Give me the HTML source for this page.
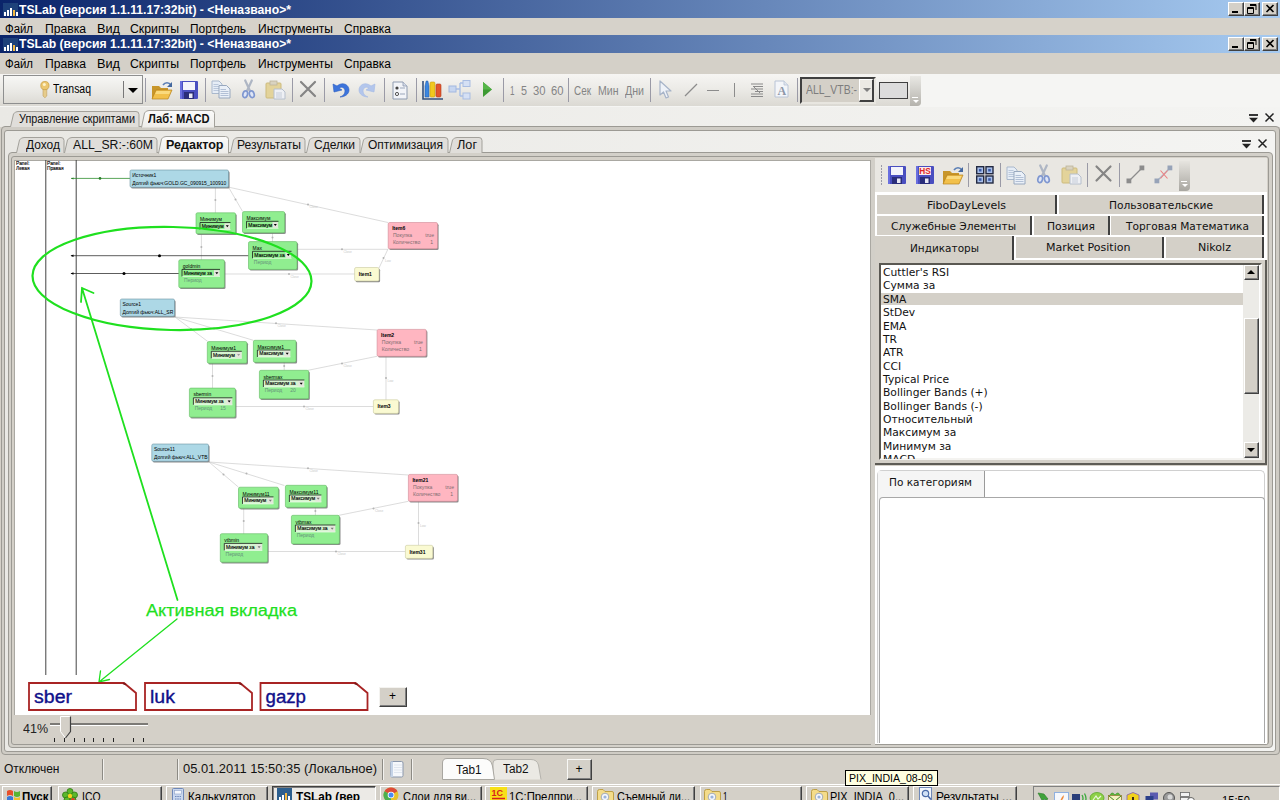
<!DOCTYPE html>
<html lang="ru"><head><meta charset="utf-8"><title>TSLab</title>
<style>
html,body{margin:0;padding:0;overflow:hidden}
html{width:1280px;height:800px}
body{width:1280px;height:800px;overflow:hidden;position:relative;background:#d4d0c8;font-family:"Liberation Sans",sans-serif;font-size:12px}
.a{position:absolute;box-sizing:border-box}
.t{position:absolute;white-space:pre}
svg{position:absolute;overflow:visible}
svg text{white-space:pre}
</style></head><body>
<div class="a" style="left:0px;top:0px;width:1280px;height:18px;background:linear-gradient(90deg,#0a246a 0%,#a6caf0 100%);"></div>
<svg style="left:3px;top:3px" width="15" height="13" viewBox="0 0 15 13"><rect x="0" y="0" width="15" height="13" fill="#2d5a86" opacity=".55"/><rect x="1" y="9" width="2" height="4" fill="#fff"/><rect x="4" y="7" width="2" height="6" fill="#fff"/><rect x="7" y="5" width="2" height="8" fill="#fff"/><rect x="10" y="7" width="2" height="6" fill="#f5b942"/><rect x="13" y="9" width="2" height="4" fill="#fff"/></svg>
<div class="t" style="left:19px;top:1.5px;line-height:16px;font-size:12px;font-family:'Liberation Sans',sans-serif;color:#fff;font-weight:bold;transform:scaleX(1.0142);transform-origin:left;">TSLab (версия 1.1.11.17:32bit) - &lt;Неназвано&gt;*</div>
<div class="a" style="left:1228px;top:2px;width:16px;height:14px;background:#d4d0c8;border:1px solid;border-color:#fff #404040 #404040 #fff;box-shadow:inset -1px -1px 0 #808080;"></div>
<div class="a" style="left:1232px;top:11px;width:6px;height:2px;background:#000;"></div>
<div class="a" style="left:1244px;top:2px;width:16px;height:14px;background:#d4d0c8;border:1px solid;border-color:#fff #404040 #404040 #fff;box-shadow:inset -1px -1px 0 #808080;"></div>
<svg style="left:1247px;top:4px" width="10" height="10" viewBox="0 0 10 10"><path d="M3 0.5h6v5.5M3 1.5h6M0.5 3.5h6v6h-6zM0.5 4.5h6" fill="none" stroke="#000" stroke-width="1"/></svg>
<div class="a" style="left:1262px;top:2px;width:16px;height:14px;background:#d4d0c8;border:1px solid;border-color:#fff #404040 #404040 #fff;box-shadow:inset -1px -1px 0 #808080;"></div>
<svg style="left:1266px;top:4.5px" width="8" height="7" viewBox="0 0 8 7"><path d="M0.5 0l7 7M7.5 0l-7 7" stroke="#000" stroke-width="1.6" fill="none"/></svg>
<div class="a" style="left:0px;top:18px;width:1280px;height:17px;background:#d6d2ca;"></div>
<div class="t" style="left:5px;top:21.0px;line-height:16px;font-size:12px;font-family:'Liberation Sans',sans-serif;color:#000;transform:scaleX(0.9491);transform-origin:left;">Файл</div>
<div class="t" style="left:45px;top:21.0px;line-height:16px;font-size:12px;font-family:'Liberation Sans',sans-serif;color:#000;transform:scaleX(1.0115);transform-origin:left;">Правка</div>
<div class="t" style="left:97px;top:21.0px;line-height:16px;font-size:12px;font-family:'Liberation Sans',sans-serif;color:#000;transform:scaleX(1.0595);transform-origin:left;">Вид</div>
<div class="t" style="left:130px;top:21.0px;line-height:16px;font-size:12px;font-family:'Liberation Sans',sans-serif;color:#000;transform:scaleX(1.0227);transform-origin:left;">Скрипты</div>
<div class="t" style="left:190px;top:21.0px;line-height:16px;font-size:12px;font-family:'Liberation Sans',sans-serif;color:#000;transform:scaleX(0.9893);transform-origin:left;">Портфель</div>
<div class="t" style="left:258px;top:21.0px;line-height:16px;font-size:12px;font-family:'Liberation Sans',sans-serif;color:#000;transform:scaleX(1.0023);transform-origin:left;">Инструменты</div>
<div class="t" style="left:344px;top:21.0px;line-height:16px;font-size:12px;font-family:'Liberation Sans',sans-serif;color:#000;transform:scaleX(0.9984);transform-origin:left;">Справка</div>
<div class="a" style="left:0px;top:35px;width:1280px;height:17.5px;background:linear-gradient(90deg,#0a246a 0%,#a6caf0 100%);"></div>
<svg style="left:3px;top:38px" width="15" height="13" viewBox="0 0 15 13"><rect x="0" y="0" width="15" height="13" fill="#2d5a86" opacity=".55"/><rect x="1" y="9" width="2" height="4" fill="#fff"/><rect x="4" y="7" width="2" height="6" fill="#fff"/><rect x="7" y="5" width="2" height="8" fill="#fff"/><rect x="10" y="7" width="2" height="6" fill="#f5b942"/><rect x="13" y="9" width="2" height="4" fill="#fff"/></svg>
<div class="t" style="left:19px;top:36.2px;line-height:16px;font-size:12px;font-family:'Liberation Sans',sans-serif;color:#fff;font-weight:bold;transform:scaleX(1.0142);transform-origin:left;">TSLab (версия 1.1.11.17:32bit) - &lt;Неназвано&gt;*</div>
<div class="a" style="left:1228px;top:37px;width:16px;height:14px;background:#d4d0c8;border:1px solid;border-color:#fff #404040 #404040 #fff;box-shadow:inset -1px -1px 0 #808080;"></div>
<div class="a" style="left:1232px;top:46px;width:6px;height:2px;background:#000;"></div>
<div class="a" style="left:1244px;top:37px;width:16px;height:14px;background:#d4d0c8;border:1px solid;border-color:#fff #404040 #404040 #fff;box-shadow:inset -1px -1px 0 #808080;"></div>
<svg style="left:1247px;top:39px" width="10" height="10" viewBox="0 0 10 10"><path d="M3 0.5h6v5.5M3 1.5h6M0.5 3.5h6v6h-6zM0.5 4.5h6" fill="none" stroke="#000" stroke-width="1"/></svg>
<div class="a" style="left:1262px;top:37px;width:16px;height:14px;background:#d4d0c8;border:1px solid;border-color:#fff #404040 #404040 #fff;box-shadow:inset -1px -1px 0 #808080;"></div>
<svg style="left:1266px;top:39.5px" width="8" height="7" viewBox="0 0 8 7"><path d="M0.5 0l7 7M7.5 0l-7 7" stroke="#000" stroke-width="1.6" fill="none"/></svg>
<div class="a" style="left:0px;top:52.5px;width:1280px;height:22px;background:#d4d0c8;"></div>
<div class="t" style="left:5px;top:56.0px;line-height:16px;font-size:12px;font-family:'Liberation Sans',sans-serif;color:#000;transform:scaleX(0.9491);transform-origin:left;">Файл</div>
<div class="t" style="left:45px;top:56.0px;line-height:16px;font-size:12px;font-family:'Liberation Sans',sans-serif;color:#000;transform:scaleX(1.0115);transform-origin:left;">Правка</div>
<div class="t" style="left:97px;top:56.0px;line-height:16px;font-size:12px;font-family:'Liberation Sans',sans-serif;color:#000;transform:scaleX(1.0595);transform-origin:left;">Вид</div>
<div class="t" style="left:130px;top:56.0px;line-height:16px;font-size:12px;font-family:'Liberation Sans',sans-serif;color:#000;transform:scaleX(1.0227);transform-origin:left;">Скрипты</div>
<div class="t" style="left:190px;top:56.0px;line-height:16px;font-size:12px;font-family:'Liberation Sans',sans-serif;color:#000;transform:scaleX(0.9893);transform-origin:left;">Портфель</div>
<div class="t" style="left:258px;top:56.0px;line-height:16px;font-size:12px;font-family:'Liberation Sans',sans-serif;color:#000;transform:scaleX(1.0023);transform-origin:left;">Инструменты</div>
<div class="t" style="left:344px;top:56.0px;line-height:16px;font-size:12px;font-family:'Liberation Sans',sans-serif;color:#000;transform:scaleX(0.9984);transform-origin:left;">Справка</div>
<div class="a" style="left:0px;top:74px;width:1280px;height:33px;background:#f5f5f3;"></div>
<div class="a" style="left:0px;top:74px;width:921px;height:32px;background:linear-gradient(180deg,#f6f5f3 0%,#ecebe7 45%,#dbd9d3 100%);border-radius:0 0 4px 0;"></div>
<div class="a" style="left:3px;top:75px;width:140px;height:29px;border:1px solid #8e8f8f;background:linear-gradient(180deg,#f7f7f5,#e9e8e4 60%,#dddbd5);"></div>
<div class="a" style="left:123px;top:81px;width:1px;height:17px;background:#777;"></div>
<svg style="left:128px;top:88px" width="10" height="5" viewBox="0 0 10 5"><path d="M0 0h10l-5 5z" fill="#000"/></svg>
<svg style="left:40px;top:81px" width="10" height="17" viewBox="0 0 10 17"><path d="M3 7.500h3.800v7.500l-1.900 1.800L3 15z" fill="#e6cc8c" stroke="#bfa060" stroke-width=".6"/><circle cx="4.900" cy="4.600" r="4.100" fill="#ecc770" stroke="#c9a044" stroke-width=".8"/><circle cx="4.300" cy="3.400" r="1.500" fill="#fdf3cc"/></svg>
<div class="t" style="left:53px;top:81.0px;line-height:16px;font-size:12px;font-family:'Liberation Sans',sans-serif;color:#000;transform:scaleX(0.8720);transform-origin:left;">Transaq</div>
<div class="a" style="left:145px;top:78px;width:1px;height:24px;background:#9a9aa6;"></div>
<div class="a" style="left:205px;top:78px;width:1px;height:24px;background:#9a9aa6;"></div>
<div class="a" style="left:292px;top:78px;width:1px;height:24px;background:#9a9aa6;"></div>
<div class="a" style="left:324px;top:78px;width:1px;height:24px;background:#9a9aa6;"></div>
<div class="a" style="left:384px;top:78px;width:1px;height:24px;background:#9a9aa6;"></div>
<div class="a" style="left:416px;top:78px;width:1px;height:24px;background:#9a9aa6;"></div>
<div class="a" style="left:503px;top:78px;width:1px;height:24px;background:#9a9aa6;"></div>
<div class="a" style="left:568px;top:78px;width:1px;height:24px;background:#9a9aa6;"></div>
<div class="a" style="left:650px;top:78px;width:1px;height:24px;background:#9a9aa6;"></div>
<div class="a" style="left:797px;top:78px;width:1px;height:24px;background:#9a9aa6;"></div>
<svg style="left:151px;top:80px" width="22" height="20" viewBox="0 0 22 20"><path d="M1 6h7l2 2h7v11H1z" fill="#c8962a"/><path d="M1 19l4-9h16l-4 9z" fill="#f2c04a" stroke="#b8821c" stroke-width=".7"/><path d="M5.500 11h14l-1.300 3h-14z" fill="#fbe08a" opacity=".8"/><path d="M12 5c2-3 6-3 8 0" fill="none" stroke="#5b7fb5" stroke-width="1.6"/><path d="M21 2v5h-5z" fill="#44689f"/></svg>
<svg style="left:180px;top:81px" width="18" height="18" viewBox="0 0 18 18"><rect x="0" y="0" width="18" height="18" rx="1" fill="#4a4fc0"/><rect x="3" y="1" width="12" height="8" fill="#f4f4fb"/><rect x="4" y="11" width="10" height="7" fill="#2a2d7a"/><rect x="9" y="12.5" width="3.5" height="4.5" fill="#e8e8f4"/><rect x="0" y="0" width="2" height="18" fill="#6a6fdf"/></svg>
<svg style="left:211px;top:80px" width="20" height="19" viewBox="0 0 20 19"><path d="M1 1h7l3 3v9.500H1z" fill="#e6edf6" stroke="#a9b8cc" stroke-width="1"/><path d="M2.500 4.500h5M2.500 6.500h6.500M2.500 8.500h6.500M2.500 10.500h6.500" stroke="#aebdd4" stroke-width=".8"/><path d="M8 5.500h7.500l3.500 3.500v9H8z" fill="#eaf0f8" stroke="#98a8be" stroke-width="1"/><path d="M9.500 9.500h5.500M9.500 11.500h8M9.500 13.500h8M9.500 15.500h8" stroke="#a3b4cd" stroke-width=".8"/></svg>
<svg style="left:242px;top:80px" width="13" height="19" viewBox="0 0 13 19"><path d="M3.200 0.500L8.300 11.500M9.800 0.500L4.700 11.500" stroke="#aeb6c4" stroke-width="2.200" fill="none" stroke-linecap="round"/><ellipse cx="3.200" cy="14.300" rx="2.300" ry="3.400" transform="rotate(18 3.2 14.3)" fill="#dfe6f6" stroke="#7f97d0" stroke-width="1.700"/><ellipse cx="9.800" cy="14.300" rx="2.300" ry="3.400" transform="rotate(-18 9.8 14.3)" fill="#dfe6f6" stroke="#7f97d0" stroke-width="1.700"/></svg>
<svg style="left:265px;top:80px" width="22" height="20" viewBox="0 0 22 20"><rect x="1" y="3" width="15" height="15" rx="1" fill="#e3d39a" stroke="#cdbb7c" stroke-width="1"/><rect x="5" y="1" width="7" height="4" fill="#d9d3c0" stroke="#bdb59a" stroke-width=".8"/><path d="M9 9h8l3 3v7H9z" fill="#eef0f4" stroke="#b6bfcc" stroke-width="1"/><path d="M11 13h6M11 15h6M11 17h6" stroke="#c5ccd8" stroke-width="1"/></svg>
<svg style="left:299px;top:80px" width="18" height="18" viewBox="0 0 18 18"><path d="M2 2l14 14M16 2l-14 14" stroke="#858585" stroke-width="2.2" fill="none" stroke-linecap="round"/></svg>
<svg style="left:331px;top:80px" width="19" height="19" viewBox="0 0 19 19"><path d="M2 4l1 8 8-2-3-2c3-2 6 0 6 3s-2 5-5 6c5 0 9-3 9-7 0-5-6-9-12-4z" fill="#3c74dc" stroke="#2a5cc0" stroke-width=".6"/></svg>
<svg style="left:358px;top:80px" width="19" height="19" viewBox="0 0 19 19"><path d="M17 4l-1 8-8-2 3-2c-3-2-6 0-6 3s2 5 5 6c-5 0-9-3-9-7 0-5 6-9 12-4z" fill="#b3c6ec" stroke="#a2b8e4" stroke-width=".6"/></svg>
<svg style="left:392px;top:81px" width="16" height="19" viewBox="0 0 16 19"><path d="M1 1h10l4 4v13H1z" fill="#f2f4f8" stroke="#8e9bb0" stroke-width="1"/><path d="M11 1v4h4" fill="#d6dce8" stroke="#8e9bb0" stroke-width=".8"/><circle cx="5" cy="7" r="1.6" fill="#444"/><circle cx="5" cy="13" r="1.6" fill="none" stroke="#555" stroke-width="1"/><path d="M8 7h5M8 13h5" stroke="#9aa6ba" stroke-width="1.2"/></svg>
<svg style="left:421px;top:79px" width="23" height="22" viewBox="0 0 23 22"><path d="M2 2v18h20" fill="none" stroke="#33507e" stroke-width="1.6"/><path d="M4 7l1.200-5h1.600l1.200 5v11H4z" fill="#3b86e0" stroke="#245fb0" stroke-width=".6"/><rect x="9" y="3" width="5" height="15" rx="1.200" fill="#f1c81e" stroke="#c79d10" stroke-width=".6"/><rect x="15" y="5" width="5" height="13" rx="1.200" fill="#e2552d" stroke="#b13a1a" stroke-width=".6"/></svg>
<svg style="left:449px;top:80px" width="22" height="20" viewBox="0 0 22 20"><path d="M7 9h4M11 3v13M11 3h3M11 16h3" stroke="#a9bfe6" stroke-width="1.4" fill="none"/><rect x="0" y="6" width="7" height="6" fill="#c7d6f0" stroke="#a2b8e0" stroke-width="1"/><rect x="14" y="0.500" width="7" height="6" fill="#d5e0f4" stroke="#a9bde2" stroke-width="1"/><rect x="14" y="13" width="7" height="6" fill="#d5e0f4" stroke="#a9bde2" stroke-width="1"/></svg>
<svg style="left:483px;top:82px" width="9" height="15" viewBox="0 0 9 15"><path d="M0 0l9 7.500-9 7.500z" fill="#3d9a32"/><path d="M0 0l9 7.500-9 0z" fill="#55b548"/></svg>
<div class="t" style="left:509.5px;top:82.5px;line-height:16px;font-size:12px;font-family:'Liberation Sans',sans-serif;color:#848484;transform:scaleX(0.6743);transform-origin:left;">1</div>
<div class="t" style="left:521px;top:82.5px;line-height:16px;font-size:12px;font-family:'Liberation Sans',sans-serif;color:#848484;transform:scaleX(0.8990);transform-origin:left;">5</div>
<div class="t" style="left:533px;top:82.5px;line-height:16px;font-size:12px;font-family:'Liberation Sans',sans-serif;color:#848484;transform:scaleX(0.9365);transform-origin:left;">30</div>
<div class="t" style="left:551px;top:82.5px;line-height:16px;font-size:12px;font-family:'Liberation Sans',sans-serif;color:#848484;transform:scaleX(0.9365);transform-origin:left;">60</div>
<div class="t" style="left:574px;top:82.5px;line-height:16px;font-size:12px;font-family:'Liberation Sans',sans-serif;color:#848484;transform:scaleX(0.8256);transform-origin:left;">Сек</div>
<div class="t" style="left:598px;top:82.5px;line-height:16px;font-size:12px;font-family:'Liberation Sans',sans-serif;color:#848484;transform:scaleX(0.8788);transform-origin:left;">Мин</div>
<div class="t" style="left:625px;top:82.5px;line-height:16px;font-size:12px;font-family:'Liberation Sans',sans-serif;color:#848484;transform:scaleX(0.8855);transform-origin:left;">Дни</div>
<svg style="left:658px;top:80px" width="15" height="20" viewBox="0 0 15 20"><path d="M2 1v14l3.500-3 2.500 6 2.500-1-2.500-6h5z" fill="#eef2f8" stroke="#a7b4c8" stroke-width="1.2" stroke-linejoin="round"/></svg>
<svg style="left:684px;top:83px" width="14" height="14" viewBox="0 0 14 14"><path d="M1 13L13 1" stroke="#8c8c8c" stroke-width="1.3"/></svg>
<div class="a" style="left:706.5px;top:89.5px;width:12.5px;height:1.5px;background:#8c8c8c;"></div>
<div class="a" style="left:734px;top:83px;width:1.3px;height:13.5px;background:#8c8c8c;"></div>
<svg style="left:750px;top:83px" width="14" height="14" viewBox="0 0 14 14"><path d="M1 1h12M4 3.500h9M1 6h12M5 8.500h8M1 11h12M1 13.500h12" stroke="#8a8a8a" stroke-width="1.2"/><path d="M3 3l7 7" stroke="#8a8a8a" stroke-width="1"/></svg>
<svg style="left:774px;top:80px" width="15" height="18" viewBox="0 0 15 18"><path d="M1 1h9l4 4v12H1z" fill="#f3f5f9" stroke="#b9c4d6" stroke-width="1"/><path d="M10 1v4h4" fill="#dfe5ef" stroke="#b9c4d6" stroke-width=".8"/><text x="3.500" y="15" font-family="Liberation Serif,serif" font-size="12" fill="#8d97a8" font-weight="bold">A</text></svg>
<div class="a" style="left:800px;top:76.5px;width:75.5px;height:27px;background:#d4d0c8;border:2px solid;border-color:#404040 #e8e6e0 #e8e6e0 #404040;"></div>
<div class="t" style="left:805.5px;top:82.0px;line-height:16px;font-size:12px;font-family:'Liberation Sans',sans-serif;color:#7d7d7d;transform:scaleX(0.8689);transform-origin:left;">ALL_VTB:-</div>
<div class="a" style="left:859px;top:79px;width:15px;height:23px;background:#ebe9e4;border:solid;border-width:1px 2px 2px 1px;border-color:#fff #404040 #404040 #fff;"></div>
<svg style="left:862.5px;top:88px" width="8" height="4" viewBox="0 0 8 4"><path d="M0 0h8l-4 4z" fill="#808080"/></svg>
<div class="a" style="left:879px;top:82px;width:28.5px;height:16.5px;background:#dcdcdc;border:1px solid #404040;"></div>
<div class="a" style="left:910px;top:76px;width:11px;height:30px;background:linear-gradient(180deg,#e9e8e4,#b5b3ad);border-radius:0 0 4px 0;"></div>
<svg style="left:912px;top:97px" width="8" height="7" viewBox="0 0 8 7"><path d="M0 0.500h6" stroke="#fff" stroke-width="1"/><path d="M1 3h6l-3 3z" fill="#fff"/><path d="M0 2.500h6l-3 3z" fill="#5a5a5a" opacity=".0"/></svg>
<div class="a" style="left:0px;top:107px;width:1280px;height:20px;background:linear-gradient(90deg,#eae9e5,#f4f4f2);"></div>
<div class="a" style="left:0.5px;top:126px;width:1279.0px;height:629px;background:#cfccc5;border:1px solid #9c9a94;border-radius:4px;"></div>
<div class="a" style="left:4.0px;top:129.5px;width:1272.0px;height:622px;background:linear-gradient(90deg,#e9e8e4,#f4f4f2);border:1px solid #9c9a94;border-radius:3px;"></div>
<div class="a" style="left:7.5px;top:152px;width:1265.0px;height:596px;background:#d3d0c9;border:1px solid #9c9a94;border-radius:4px;"></div>
<div class="a" style="left:11.0px;top:155.5px;width:1258.0px;height:589px;background:#d4d0c8;border:1px solid #9c9a94;border-radius:3px;"></div>
<div class="a" style="left:14px;top:159.5px;width:856.5px;height:555px;background:#fff;border:1px solid #aaa8a2;border-width:1px 1px 0 1px;"></div>
<div class="a" style="left:870.5px;top:159.5px;width:4px;height:585px;background:#d2cfc8;"></div>
<div class="a" style="left:874.5px;top:158px;width:392px;height:34px;background:#e9e7e2;"></div>
<svg style="left:10px;top:110.5px" width="133" height="16.0"><path d="M0.5 16.0 L3.5 3 Q5 0.5 8 0.5 L126 0.5 Q129 0.5 129 3.5 L129 16.0" fill="#e0deda" stroke="#a3a19b" stroke-width="1"/></svg>
<div class="t" style="left:19px;top:111.0px;line-height:16px;font-size:12px;font-family:'Liberation Sans',sans-serif;color:#111;transform:scaleX(0.9051);transform-origin:left;">Управление скриптами</div>
<svg style="left:141px;top:110px" width="77.5" height="17.5"><defs><linearGradient id="tg1" x1="0" y1="0" x2="0" y2="1"><stop offset="0" stop-color="#fbfbfa"/><stop offset="1" stop-color="#eeedea"/></linearGradient></defs><path d="M0.5 17.5 L3.5 3 Q5 0.5 8 0.5 L70.5 0.5 Q73.5 0.5 73.5 3.5 L73.5 17.5" fill="url(#tg1)" stroke="#a3a19b" stroke-width="1"/></svg>
<div class="t" style="left:148px;top:111.2px;line-height:16px;font-size:12px;font-family:'Liberation Sans',sans-serif;color:#111;font-weight:bold;transform:scaleX(0.9300);transform-origin:left;">Лаб: MACD</div>
<svg style="left:16px;top:136.5px" width="52" height="16.0"><path d="M0.5 16.0 L3.5 3 Q5 0.5 8 0.5 L45 0.5 Q48 0.5 48 3.5 L48 16.0" fill="#e0deda" stroke="#a3a19b" stroke-width="1"/></svg>
<div class="t" style="left:26px;top:137.0px;line-height:16px;font-size:12px;font-family:'Liberation Sans',sans-serif;color:#111;transform:scaleX(0.9977);transform-origin:left;">Доход</div>
<svg style="left:64px;top:136.5px" width="97" height="16.0"><path d="M0.5 16.0 L3.5 3 Q5 0.5 8 0.5 L90 0.5 Q93 0.5 93 3.5 L93 16.0" fill="#e0deda" stroke="#a3a19b" stroke-width="1"/></svg>
<div class="t" style="left:73px;top:137.0px;line-height:16px;font-size:12px;font-family:'Liberation Sans',sans-serif;color:#111;transform:scaleX(1.0165);transform-origin:left;">ALL_SR:-:60M</div>
<svg style="left:158px;top:136px" width="74.5" height="17.5"><defs><linearGradient id="tg2" x1="0" y1="0" x2="0" y2="1"><stop offset="0" stop-color="#fbfbfa"/><stop offset="1" stop-color="#eeedea"/></linearGradient></defs><path d="M0.5 17.5 L3.5 3 Q5 0.5 8 0.5 L67.5 0.5 Q70.5 0.5 70.5 3.5 L70.5 17.5" fill="url(#tg2)" stroke="#a3a19b" stroke-width="1"/></svg>
<div class="t" style="left:166.3px;top:137.2px;line-height:16px;font-size:12px;font-family:'Liberation Sans',sans-serif;color:#111;font-weight:bold;transform:scaleX(1.0444);transform-origin:left;">Редактор</div>
<svg style="left:230px;top:136.5px" width="79" height="16.0"><path d="M0.5 16.0 L3.5 3 Q5 0.5 8 0.5 L72 0.5 Q75 0.5 75 3.5 L75 16.0" fill="#e0deda" stroke="#a3a19b" stroke-width="1"/></svg>
<div class="t" style="left:237px;top:137.0px;line-height:16px;font-size:12px;font-family:'Liberation Sans',sans-serif;color:#111;transform:scaleX(1.0127);transform-origin:left;">Результаты</div>
<svg style="left:306px;top:136.5px" width="58" height="16.0"><path d="M0.5 16.0 L3.5 3 Q5 0.5 8 0.5 L51 0.5 Q54 0.5 54 3.5 L54 16.0" fill="#e0deda" stroke="#a3a19b" stroke-width="1"/></svg>
<div class="t" style="left:314px;top:137.0px;line-height:16px;font-size:12px;font-family:'Liberation Sans',sans-serif;color:#111;transform:scaleX(1.0025);transform-origin:left;">Сделки</div>
<svg style="left:360px;top:136.5px" width="92" height="16.0"><path d="M0.5 16.0 L3.5 3 Q5 0.5 8 0.5 L85 0.5 Q88 0.5 88 3.5 L88 16.0" fill="#e0deda" stroke="#a3a19b" stroke-width="1"/></svg>
<div class="t" style="left:368px;top:137.0px;line-height:16px;font-size:12px;font-family:'Liberation Sans',sans-serif;color:#111;transform:scaleX(0.9969);transform-origin:left;">Оптимизация</div>
<svg style="left:449px;top:136.5px" width="37" height="16.0"><path d="M0.5 16.0 L3.5 3 Q5 0.5 8 0.5 L30 0.5 Q33 0.5 33 3.5 L33 16.0" fill="#e0deda" stroke="#a3a19b" stroke-width="1"/></svg>
<div class="t" style="left:457px;top:137.0px;line-height:16px;font-size:12px;font-family:'Liberation Sans',sans-serif;color:#111;transform:scaleX(1.0568);transform-origin:left;">Лог</div>
<svg style="left:1249px;top:113.5px" width="9" height="9" viewBox="0 0 9 9"><path d="M0 1h9" stroke="#222" stroke-width="1.800"/><path d="M0 3.800h9l-4.500 4.700z" fill="#222"/></svg>
<svg style="left:1265px;top:113px" width="9" height="9" viewBox="0 0 9 9"><path d="M0.500 0.500l8 8M8.500 0.500l-8 8" stroke="#222" stroke-width="1.5" fill="none"/></svg>
<svg style="left:1242px;top:139.5px" width="9" height="9" viewBox="0 0 9 9"><path d="M0 1h9" stroke="#222" stroke-width="1.800"/><path d="M0 3.800h9l-4.500 4.700z" fill="#222"/></svg>
<svg style="left:1258px;top:139px" width="9" height="9" viewBox="0 0 9 9"><path d="M0.500 0.500l8 8M8.500 0.500l-8 8" stroke="#222" stroke-width="1.5" fill="none"/></svg>
<svg style="left:0;top:0" width="1280" height="800" viewBox="0 0 1280 800"><path d="M45.8 160V675M76.2 160V675" stroke="#444" stroke-width="1" fill="none"/>
<text x="16" y="165" font-size="4.8" fill="#000" font-family="'Liberation Sans',sans-serif" stroke="#000" stroke-width=".12">Panel:</text>
<text x="16" y="170" font-size="4.8" fill="#000" font-family="'Liberation Sans',sans-serif" stroke="#000" stroke-width=".12">Левая</text>
<text x="47" y="165" font-size="4.8" fill="#000" font-family="'Liberation Sans',sans-serif" stroke="#000" stroke-width=".12">Panel:</text>
<text x="47" y="170" font-size="4.8" fill="#000" font-family="'Liberation Sans',sans-serif" stroke="#000" stroke-width=".12">Правая</text>
<path d="M215.4 187 L215.4 213" fill="none" stroke="#cdcdcd" stroke-width=".7"/>
<circle cx="215.4" cy="200" r="1" fill="#b4b4b4"/>
<path d="M229 188 L242.6 211.5" fill="none" stroke="#cdcdcd" stroke-width=".7"/>
<circle cx="235.5" cy="199.5" r="1" fill="#b4b4b4"/>
<path d="M228 187 L388 222.5" fill="none" stroke="#cdcdcd" stroke-width=".7"/>
<circle cx="308" cy="204.5" r="1" fill="#b4b4b4"/>
<text x="309.5" y="208.1" font-size="3.2" fill="#c8c8c8" font-family="'Liberation Sans',sans-serif">Close</text>
<path d="M201.4 234 L201.4 260" fill="none" stroke="#cdcdcd" stroke-width=".7"/>
<circle cx="201.4" cy="247" r="1" fill="#b4b4b4"/>
<path d="M272.5 233 L272.5 242" fill="none" stroke="#cdcdcd" stroke-width=".7"/>
<circle cx="272.5" cy="237.5" r="1" fill="#b4b4b4"/>
<path d="M297 249.3 L388 249.3" fill="none" stroke="#cdcdcd" stroke-width=".7"/>
<circle cx="342" cy="249.3" r="1" fill="#b4b4b4"/>
<text x="343.5" y="252.9" font-size="3.2" fill="#c8c8c8" font-family="'Liberation Sans',sans-serif">Close</text>
<path d="M224 274 L355 274" fill="none" stroke="#cdcdcd" stroke-width=".7"/>
<circle cx="289" cy="274" r="1" fill="#b4b4b4"/>
<text x="290.5" y="277.6" font-size="3.2" fill="#c8c8c8" font-family="'Liberation Sans',sans-serif">Close</text>
<path d="M388 249 L379 268" fill="none" stroke="#cdcdcd" stroke-width=".7"/>
<circle cx="383.5" cy="258" r="1" fill="#b4b4b4"/>
<text x="385.0" y="261.6" font-size="3.2" fill="#c8c8c8" font-family="'Liberation Sans',sans-serif">Low</text>
<path d="M175 317 L207.8 341.5" fill="none" stroke="#cdcdcd" stroke-width=".7"/>
<circle cx="191" cy="329" r="1" fill="#b4b4b4"/>
<path d="M175 317 L253.4 340.3" fill="none" stroke="#cdcdcd" stroke-width=".7"/>
<circle cx="214" cy="328.5" r="1" fill="#b4b4b4"/>
<path d="M175 317 L377 330" fill="none" stroke="#cdcdcd" stroke-width=".7"/>
<circle cx="276" cy="323.3" r="1" fill="#b4b4b4"/>
<text x="277.5" y="326.90000000000003" font-size="3.2" fill="#c8c8c8" font-family="'Liberation Sans',sans-serif">Close</text>
<path d="M212.5 363 L212.5 388" fill="none" stroke="#cdcdcd" stroke-width=".7"/>
<circle cx="212.5" cy="376" r="1" fill="#b4b4b4"/>
<path d="M284.2 362 L284.2 370.3" fill="none" stroke="#cdcdcd" stroke-width=".7"/>
<circle cx="284.2" cy="366" r="1" fill="#b4b4b4"/>
<path d="M308 370.3 L377 356.3" fill="none" stroke="#cdcdcd" stroke-width=".7"/>
<circle cx="342" cy="363.5" r="1" fill="#b4b4b4"/>
<text x="343.5" y="367.1" font-size="3.2" fill="#c8c8c8" font-family="'Liberation Sans',sans-serif">Close</text>
<path d="M235 406.5 L373.4 406.5" fill="none" stroke="#cdcdcd" stroke-width=".7"/>
<circle cx="304" cy="406.5" r="1" fill="#b4b4b4"/>
<text x="305.5" y="410.1" font-size="3.2" fill="#c8c8c8" font-family="'Liberation Sans',sans-serif">Close</text>
<path d="M386 356 L386 400" fill="none" stroke="#cdcdcd" stroke-width=".7"/>
<circle cx="386" cy="378" r="1" fill="#b4b4b4"/>
<text x="387.5" y="381.6" font-size="3.2" fill="#c8c8c8" font-family="'Liberation Sans',sans-serif">Low</text>
<path d="M209 462 L238.5 487.2" fill="none" stroke="#cdcdcd" stroke-width=".7"/>
<circle cx="223.5" cy="474.5" r="1" fill="#b4b4b4"/>
<path d="M209 462 L284.4 485.5" fill="none" stroke="#cdcdcd" stroke-width=".7"/>
<circle cx="246.5" cy="473.5" r="1" fill="#b4b4b4"/>
<path d="M209 462 L408.4 475" fill="none" stroke="#cdcdcd" stroke-width=".7"/>
<circle cx="308" cy="468.2" r="1" fill="#b4b4b4"/>
<text x="309.5" y="471.8" font-size="3.2" fill="#c8c8c8" font-family="'Liberation Sans',sans-serif">Close</text>
<path d="M243.7 508 L243.7 534" fill="none" stroke="#cdcdcd" stroke-width=".7"/>
<circle cx="243.7" cy="521" r="1" fill="#b4b4b4"/>
<path d="M315.4 507 L315.4 515.3" fill="none" stroke="#cdcdcd" stroke-width=".7"/>
<circle cx="315.4" cy="511" r="1" fill="#b4b4b4"/>
<path d="M339 515.3 L408.4 501.3" fill="none" stroke="#cdcdcd" stroke-width=".7"/>
<circle cx="373.5" cy="508.5" r="1" fill="#b4b4b4"/>
<text x="375.0" y="512.1" font-size="3.2" fill="#c8c8c8" font-family="'Liberation Sans',sans-serif">Close</text>
<path d="M267.6 551.5 L405.4 551.5" fill="none" stroke="#cdcdcd" stroke-width=".7"/>
<circle cx="336" cy="551.5" r="1" fill="#b4b4b4"/>
<text x="337.5" y="555.1" font-size="3.2" fill="#c8c8c8" font-family="'Liberation Sans',sans-serif">Close</text>
<path d="M418.5 501 L418.5 545.3" fill="none" stroke="#cdcdcd" stroke-width=".7"/>
<circle cx="418.5" cy="523" r="1" fill="#b4b4b4"/>
<text x="420.0" y="526.6" font-size="3.2" fill="#c8c8c8" font-family="'Liberation Sans',sans-serif">Low</text>
<path d="M71 178.4H130" stroke="#2f8f2f" stroke-width=".8"/><circle cx="100" cy="178.4" r="1.3" fill="#2a7f2a"/><path d="M71 178.4l2.500-1v2z" fill="#2a7f2a"/>
<path d="M71 255.700H248.500M71 273.500H179" stroke="#333" stroke-width=".8"/><circle cx="159.500" cy="255.700" r="1.500" fill="#000"/><circle cx="124" cy="273.500" r="1.500" fill="#000"/><path d="M70.500 255.700l3-1.200v2.400zM70.500 273.500l3-1.200v2.400z" fill="#000"/>
<rect x="131.1" y="171.2" width="98.5" height="17.30000000000001" rx="1.5" fill="#6f6f6f" opacity=".8"/>
<rect x="130" y="170" width="98.5" height="17.30000000000001" rx="1.5" fill="#add8e6" stroke="#6d93a3" stroke-width=".6"/>
<text x="132.2" y="176.5" font-size="5" fill="#000" font-family="'Liberation Sans',sans-serif">Источник1</text>
<text x="132.2" y="184.6" font-size="5" fill="#000" font-family="'Liberation Sans',sans-serif">Долгий фьюч:GOLD.GC_090915_100910</text>
<rect x="197.1" y="214.0" width="39.599999999999994" height="21.0" rx="1.5" fill="#6f6f6f" opacity=".8"/>
<rect x="196" y="212.8" width="39.599999999999994" height="21.0" rx="1.5" fill="#90ee90" stroke="#63b863" stroke-width=".6"/>
<text x="200" y="221.10000000000002" font-size="5" fill="#000" font-family="'Liberation Sans',sans-serif">Минимум</text>
<path d="M200 229.5H230.5" stroke="#f4fff0" stroke-width=".7" fill="none"/>
<rect x="224.5" y="223.3" width="5.6" height="5.8" fill="#e4e6dc"/>
<path d="M200 229.5V222.5H230.5" stroke="#1c1c1c" stroke-width=".8" fill="none"/>
<path d="M225.8 225.3h3l-1.5 2z" fill="#000"/>
<text x="201.8" y="227.9" font-size="5" fill="#000" font-family="'Liberation Sans',sans-serif" stroke="#000" stroke-width=".12">Минимум</text>
<rect x="243.6" y="212.79999999999998" width="42.19999999999999" height="21.200000000000017" rx="1.5" fill="#6f6f6f" opacity=".8"/>
<rect x="242.5" y="211.6" width="42.19999999999999" height="21.200000000000017" rx="1.5" fill="#90ee90" stroke="#63b863" stroke-width=".6"/>
<text x="246.5" y="219.9" font-size="5" fill="#000" font-family="'Liberation Sans',sans-serif">Максимум</text>
<path d="M246.5 228.29999999999998H278.5" stroke="#f4fff0" stroke-width=".7" fill="none"/>
<rect x="272.5" y="222.1" width="5.6" height="5.8" fill="#e4e6dc"/>
<path d="M246.5 228.29999999999998V221.29999999999998H278.5" stroke="#1c1c1c" stroke-width=".8" fill="none"/>
<path d="M273.8 224.1h3l-1.5 2z" fill="#000"/>
<text x="248.3" y="226.7" font-size="5" fill="#000" font-family="'Liberation Sans',sans-serif" stroke="#000" stroke-width=".12">Максимум</text>
<rect x="249.6" y="242.79999999999998" width="48.5" height="27.799999999999983" rx="1.5" fill="#6f6f6f" opacity=".8"/>
<rect x="248.5" y="241.6" width="48.5" height="27.799999999999983" rx="1.5" fill="#90ee90" stroke="#63b863" stroke-width=".6"/>
<text x="252.5" y="249.9" font-size="5" fill="#000" font-family="'Liberation Sans',sans-serif">Max</text>
<path d="M252.5 258.29999999999995H291.5" stroke="#f4fff0" stroke-width=".7" fill="none"/>
<rect x="285.5" y="252.1" width="5.6" height="5.8" fill="#e4e6dc"/>
<path d="M252.5 258.29999999999995V251.29999999999998H291.5" stroke="#1c1c1c" stroke-width=".8" fill="none"/>
<path d="M286.8 254.1h3l-1.5 2z" fill="#000"/>
<text x="254.3" y="256.7" font-size="5" fill="#000" font-family="'Liberation Sans',sans-serif" stroke="#000" stroke-width=".12">Максимум за</text>
<text x="253.8" y="263.7" font-size="5" fill="#64907a" font-family="'Liberation Sans',sans-serif">Период</text>
<rect x="179.9" y="260.9" width="45.599999999999994" height="28.100000000000023" rx="1.5" fill="#6f6f6f" opacity=".8"/>
<rect x="178.8" y="259.7" width="45.599999999999994" height="28.100000000000023" rx="1.5" fill="#90ee90" stroke="#63b863" stroke-width=".6"/>
<text x="182.8" y="268.0" font-size="5" fill="#000" font-family="'Liberation Sans',sans-serif">goldmin</text>
<path d="M182 276.4H220" stroke="#f4fff0" stroke-width=".7" fill="none"/>
<rect x="214" y="270.2" width="5.6" height="5.8" fill="#e4e6dc"/>
<path d="M182 276.4V269.4H220" stroke="#1c1c1c" stroke-width=".8" fill="none"/>
<path d="M215.3 272.2h3l-1.5 2z" fill="#000"/>
<text x="183.8" y="274.79999999999995" font-size="5" fill="#000" font-family="'Liberation Sans',sans-serif" stroke="#000" stroke-width=".12">Минимум за</text>
<text x="184.10000000000002" y="281.8" font-size="5" fill="#64907a" font-family="'Liberation Sans',sans-serif">Период</text>
<rect x="389.3" y="223.7" width="49.30000000000001" height="26.30000000000001" rx="1.5" fill="#6f6f6f" opacity=".8"/>
<rect x="388.2" y="222.5" width="49.30000000000001" height="26.30000000000001" rx="1.5" fill="#ffb6c1" stroke="#d08a96" stroke-width=".6"/>
<text x="392.2" y="230.4" font-size="5" fill="#000" font-weight="bold" font-family="'Liberation Sans',sans-serif">Item6</text>
<text x="392.9" y="236.6" font-size="5.1" fill="#7d6c70" font-family="'Liberation Sans',sans-serif">Покупка</text>
<text x="434.0" y="236.6" font-size="5.1" fill="#7d6c70" text-anchor="end" font-family="'Liberation Sans',sans-serif">true</text>
<text x="392.9" y="243.7" font-size="5.1" fill="#7d6c70" font-family="'Liberation Sans',sans-serif">Количество</text>
<text x="433.0" y="243.7" font-size="5.1" fill="#7d6c70" text-anchor="end" font-family="'Liberation Sans',sans-serif">1</text>
<rect x="355.70000000000005" y="268.7" width="24.399999999999977" height="13.5" rx="1.5" fill="#6f6f6f" opacity=".8"/>
<rect x="354.6" y="267.5" width="24.399999999999977" height="13.5" rx="1.5" fill="#fafad2" stroke="#c9c9a0" stroke-width=".6"/>
<text x="358.8" y="276.0" font-size="5" fill="#000" font-weight="bold" font-family="'Liberation Sans',sans-serif">Item1</text>
<rect x="121.39999999999999" y="300.2" width="54.2" height="17.30000000000001" rx="1.5" fill="#6f6f6f" opacity=".8"/>
<rect x="120.3" y="299" width="54.2" height="17.30000000000001" rx="1.5" fill="#add8e6" stroke="#6d93a3" stroke-width=".6"/>
<text x="122.5" y="305.5" font-size="5" fill="#000" font-family="'Liberation Sans',sans-serif">Source1</text>
<text x="122.5" y="313.6" font-size="5" fill="#000" font-family="'Liberation Sans',sans-serif">Долгий фьюч:ALL_SR</text>
<rect x="208.4" y="342.8" width="39.599999999999994" height="21.599999999999966" rx="1.5" fill="#6f6f6f" opacity=".8"/>
<rect x="207.3" y="341.6" width="39.599999999999994" height="21.599999999999966" rx="1.5" fill="#90ee90" stroke="#63b863" stroke-width=".6"/>
<text x="211.3" y="349.90000000000003" font-size="5" fill="#000" font-family="'Liberation Sans',sans-serif">Минимум1</text>
<rect x="211.3" y="351.3" width="30.5" height="7" fill="#d6f3d0"/>
<path d="M211.3 358.3H241.8" stroke="#f4fff0" stroke-width=".7" fill="none"/>
<rect x="235.8" y="352.1" width="5.6" height="5.8" fill="#e4e6dc"/>
<path d="M211.3 358.3V351.3H241.8" stroke="#1c1c1c" stroke-width=".8" fill="none"/>
<path d="M237.10000000000002 354.1h3l-1.5 2z" fill="#999"/>
<text x="213.10000000000002" y="356.7" font-size="5" fill="#000" font-family="'Liberation Sans',sans-serif" stroke="#000" stroke-width=".12">Минимум</text>
<rect x="254.5" y="341.5" width="42.599999999999994" height="22.0" rx="1.5" fill="#6f6f6f" opacity=".8"/>
<rect x="253.4" y="340.3" width="42.599999999999994" height="22.0" rx="1.5" fill="#90ee90" stroke="#63b863" stroke-width=".6"/>
<text x="257.4" y="348.6" font-size="5" fill="#000" font-family="'Liberation Sans',sans-serif">Максимум1</text>
<rect x="257.4" y="350.0" width="33" height="7" fill="#d6f3d0"/>
<path d="M257.4 357.0H290.4" stroke="#f4fff0" stroke-width=".7" fill="none"/>
<rect x="284.4" y="350.8" width="5.6" height="5.8" fill="#e4e6dc"/>
<path d="M257.4 357.0V350.0H290.4" stroke="#1c1c1c" stroke-width=".8" fill="none"/>
<path d="M285.7 352.8h3l-1.5 2z" fill="#000"/>
<text x="259.2" y="355.4" font-size="5" fill="#000" font-family="'Liberation Sans',sans-serif" stroke="#000" stroke-width=".12">Максимум</text>
<rect x="260.5" y="371.5" width="49.30000000000001" height="28.5" rx="1.5" fill="#6f6f6f" opacity=".8"/>
<rect x="259.4" y="370.3" width="49.30000000000001" height="28.5" rx="1.5" fill="#90ee90" stroke="#63b863" stroke-width=".6"/>
<text x="263.4" y="378.6" font-size="5" fill="#000" font-family="'Liberation Sans',sans-serif">sbermax</text>
<rect x="263.4" y="380.0" width="41" height="7" fill="#d6f3d0"/>
<path d="M263.4 387.0H304.4" stroke="#f4fff0" stroke-width=".7" fill="none"/>
<rect x="298.4" y="380.8" width="5.6" height="5.8" fill="#e4e6dc"/>
<path d="M263.4 387.0V380.0H304.4" stroke="#1c1c1c" stroke-width=".8" fill="none"/>
<path d="M299.7 382.8h3l-1.5 2z" fill="#000"/>
<text x="265.2" y="385.4" font-size="5" fill="#000" font-family="'Liberation Sans',sans-serif" stroke="#000" stroke-width=".12">Максимум за</text>
<text x="264.7" y="392.40000000000003" font-size="5" fill="#64907a" font-family="'Liberation Sans',sans-serif">Период</text>
<text x="290.2" y="392.40000000000003" font-size="5" fill="#64907a" font-family="'Liberation Sans',sans-serif">20</text>
<rect x="190.5" y="389.3" width="46.0" height="29.099999999999966" rx="1.5" fill="#6f6f6f" opacity=".8"/>
<rect x="189.4" y="388.1" width="46.0" height="29.099999999999966" rx="1.5" fill="#90ee90" stroke="#63b863" stroke-width=".6"/>
<text x="193.4" y="396.40000000000003" font-size="5" fill="#000" font-family="'Liberation Sans',sans-serif">sbermin</text>
<rect x="193.4" y="397.8" width="39" height="7" fill="#d6f3d0"/>
<path d="M193.4 404.8H232.4" stroke="#f4fff0" stroke-width=".7" fill="none"/>
<rect x="226.4" y="398.6" width="5.6" height="5.8" fill="#e4e6dc"/>
<path d="M193.4 404.8V397.8H232.4" stroke="#1c1c1c" stroke-width=".8" fill="none"/>
<path d="M227.70000000000002 400.6h3l-1.5 2z" fill="#000"/>
<text x="195.20000000000002" y="403.2" font-size="5" fill="#000" font-family="'Liberation Sans',sans-serif" stroke="#000" stroke-width=".12">Минимум за</text>
<text x="194.70000000000002" y="410.20000000000005" font-size="5" fill="#64907a" font-family="'Liberation Sans',sans-serif">Период</text>
<text x="220.20000000000002" y="410.20000000000005" font-size="5" fill="#64907a" font-family="'Liberation Sans',sans-serif">15</text>
<rect x="378.20000000000005" y="330.59999999999997" width="49.19999999999999" height="26.900000000000034" rx="1.5" fill="#6f6f6f" opacity=".8"/>
<rect x="377.1" y="329.4" width="49.19999999999999" height="26.900000000000034" rx="1.5" fill="#ffb6c1" stroke="#d08a96" stroke-width=".6"/>
<text x="381.1" y="337.29999999999995" font-size="5" fill="#000" font-weight="bold" font-family="'Liberation Sans',sans-serif">Item2</text>
<text x="381.8" y="343.5" font-size="5.1" fill="#7d6c70" font-family="'Liberation Sans',sans-serif">Покупка</text>
<text x="422.8" y="343.5" font-size="5.1" fill="#7d6c70" text-anchor="end" font-family="'Liberation Sans',sans-serif">true</text>
<text x="381.8" y="350.59999999999997" font-size="5.1" fill="#7d6c70" font-family="'Liberation Sans',sans-serif">Количество</text>
<text x="421.8" y="350.59999999999997" font-size="5.1" fill="#7d6c70" text-anchor="end" font-family="'Liberation Sans',sans-serif">1</text>
<rect x="374.5" y="401.0" width="25.100000000000023" height="13.599999999999966" rx="1.5" fill="#6f6f6f" opacity=".8"/>
<rect x="373.4" y="399.8" width="25.100000000000023" height="13.599999999999966" rx="1.5" fill="#fafad2" stroke="#c9c9a0" stroke-width=".6"/>
<text x="377.59999999999997" y="408.3" font-size="5" fill="#000" font-weight="bold" font-family="'Liberation Sans',sans-serif">Item3</text>
<rect x="152.9" y="445.2" width="56.69999999999999" height="17.30000000000001" rx="1.5" fill="#6f6f6f" opacity=".8"/>
<rect x="151.8" y="444" width="56.69999999999999" height="17.30000000000001" rx="1.5" fill="#add8e6" stroke="#6d93a3" stroke-width=".6"/>
<text x="154.0" y="450.5" font-size="5" fill="#000" font-family="'Liberation Sans',sans-serif">Source11</text>
<text x="154.0" y="458.6" font-size="5" fill="#000" font-family="'Liberation Sans',sans-serif">Долгий фьюч:ALL_VTB</text>
<rect x="239.6" y="488.4" width="39.89999999999998" height="21.0" rx="1.5" fill="#6f6f6f" opacity=".8"/>
<rect x="238.5" y="487.2" width="39.89999999999998" height="21.0" rx="1.5" fill="#90ee90" stroke="#63b863" stroke-width=".6"/>
<text x="242.5" y="495.5" font-size="5" fill="#000" font-family="'Liberation Sans',sans-serif">Минимум11</text>
<rect x="242.5" y="496.9" width="31" height="7" fill="#d6f3d0"/>
<path d="M242.5 503.9H273.5" stroke="#f4fff0" stroke-width=".7" fill="none"/>
<rect x="267.5" y="497.7" width="5.6" height="5.8" fill="#e4e6dc"/>
<path d="M242.5 503.9V496.9H273.5" stroke="#1c1c1c" stroke-width=".8" fill="none"/>
<path d="M268.8 499.7h3l-1.5 2z" fill="#777"/>
<text x="244.3" y="502.29999999999995" font-size="5" fill="#000" font-family="'Liberation Sans',sans-serif" stroke="#000" stroke-width=".12">Минимум</text>
<rect x="286.5" y="486.5" width="41.200000000000045" height="22.0" rx="1.5" fill="#6f6f6f" opacity=".8"/>
<rect x="285.4" y="485.3" width="41.200000000000045" height="22.0" rx="1.5" fill="#90ee90" stroke="#63b863" stroke-width=".6"/>
<text x="289.4" y="493.6" font-size="5" fill="#000" font-family="'Liberation Sans',sans-serif">Максимум11</text>
<rect x="289.4" y="495.0" width="32" height="7" fill="#d6f3d0"/>
<path d="M289.4 502.0H321.4" stroke="#f4fff0" stroke-width=".7" fill="none"/>
<rect x="315.4" y="495.8" width="5.6" height="5.8" fill="#e4e6dc"/>
<path d="M289.4 502.0V495.0H321.4" stroke="#1c1c1c" stroke-width=".8" fill="none"/>
<path d="M316.7 497.8h3l-1.5 2z" fill="#777"/>
<text x="291.2" y="500.4" font-size="5" fill="#000" font-family="'Liberation Sans',sans-serif" stroke="#000" stroke-width=".12">Максимум</text>
<rect x="292.5" y="516.5" width="48.0" height="28.600000000000023" rx="1.5" fill="#6f6f6f" opacity=".8"/>
<rect x="291.4" y="515.3" width="48.0" height="28.600000000000023" rx="1.5" fill="#90ee90" stroke="#63b863" stroke-width=".6"/>
<text x="295.4" y="523.5999999999999" font-size="5" fill="#000" font-family="'Liberation Sans',sans-serif">vtbmax</text>
<rect x="295.4" y="525.0" width="40" height="7" fill="#d6f3d0"/>
<path d="M295.4 532.0H335.4" stroke="#f4fff0" stroke-width=".7" fill="none"/>
<rect x="329.4" y="525.8" width="5.6" height="5.8" fill="#e4e6dc"/>
<path d="M295.4 532.0V525.0H335.4" stroke="#1c1c1c" stroke-width=".8" fill="none"/>
<path d="M330.7 527.8h3l-1.5 2z" fill="#777"/>
<text x="297.2" y="530.4" font-size="5" fill="#000" font-family="'Liberation Sans',sans-serif" stroke="#000" stroke-width=".12">Максимум за</text>
<text x="296.7" y="537.4" font-size="5" fill="#64907a" font-family="'Liberation Sans',sans-serif">Период</text>
<rect x="221.4" y="534.9000000000001" width="47.30000000000001" height="28.5" rx="1.5" fill="#6f6f6f" opacity=".8"/>
<rect x="220.3" y="533.7" width="47.30000000000001" height="28.5" rx="1.5" fill="#90ee90" stroke="#63b863" stroke-width=".6"/>
<text x="224.3" y="542.0" font-size="5" fill="#000" font-family="'Liberation Sans',sans-serif">vtbmin</text>
<rect x="224.3" y="543.4000000000001" width="38" height="7" fill="#d6f3d0"/>
<path d="M224.3 550.4000000000001H262.3" stroke="#f4fff0" stroke-width=".7" fill="none"/>
<rect x="256.3" y="544.2" width="5.6" height="5.8" fill="#e4e6dc"/>
<path d="M224.3 550.4000000000001V543.4000000000001H262.3" stroke="#1c1c1c" stroke-width=".8" fill="none"/>
<path d="M257.6 546.2h3l-1.5 2z" fill="#777"/>
<text x="226.10000000000002" y="548.8000000000001" font-size="5" fill="#000" font-family="'Liberation Sans',sans-serif" stroke="#000" stroke-width=".12">Минимум за</text>
<text x="225.60000000000002" y="555.8000000000001" font-size="5" fill="#64907a" font-family="'Liberation Sans',sans-serif">Период</text>
<rect x="409.5" y="475.59999999999997" width="49.10000000000002" height="26.900000000000034" rx="1.5" fill="#6f6f6f" opacity=".8"/>
<rect x="408.4" y="474.4" width="49.10000000000002" height="26.900000000000034" rx="1.5" fill="#ffb6c1" stroke="#d08a96" stroke-width=".6"/>
<text x="412.4" y="482.29999999999995" font-size="5" fill="#000" font-weight="bold" font-family="'Liberation Sans',sans-serif">Item21</text>
<text x="413.09999999999997" y="488.5" font-size="5.1" fill="#7d6c70" font-family="'Liberation Sans',sans-serif">Покупка</text>
<text x="454.0" y="488.5" font-size="5.1" fill="#7d6c70" text-anchor="end" font-family="'Liberation Sans',sans-serif">true</text>
<text x="413.09999999999997" y="495.59999999999997" font-size="5.1" fill="#7d6c70" font-family="'Liberation Sans',sans-serif">Количество</text>
<text x="453.0" y="495.59999999999997" font-size="5.1" fill="#7d6c70" text-anchor="end" font-family="'Liberation Sans',sans-serif">1</text>
<rect x="406.5" y="546.5" width="27.400000000000034" height="13.100000000000023" rx="1.5" fill="#6f6f6f" opacity=".8"/>
<rect x="405.4" y="545.3" width="27.400000000000034" height="13.100000000000023" rx="1.5" fill="#fafad2" stroke="#c9c9a0" stroke-width=".6"/>
<text x="409.59999999999997" y="553.8" font-size="5" fill="#000" font-weight="bold" font-family="'Liberation Sans',sans-serif">Item31</text>
<ellipse cx="172" cy="278.500" rx="139.500" ry="51.500" transform="rotate(1.2 172 278.5)" fill="none" stroke="#1fe01f" stroke-width="2.200"/>
<path d="M177.500 600L82 288M93.500 293L82 288L81 302" fill="none" stroke="#1fe01f" stroke-width="1.800" stroke-linecap="round"/>
<path d="M177 619L99 682M109.500 679.500L99 682L100.500 671" fill="none" stroke="#1fe01f" stroke-width="1.300" stroke-linecap="round"/>
<text x="146" y="616" font-size="17.3" fill="#1fe01f" stroke="#1fe01f" stroke-width=".25" font-family="'Liberation Sans',sans-serif" textLength="151" lengthAdjust="spacingAndGlyphs">Активная вкладка</text>
<path d="M29 683H124L136 693V710H29Z" fill="#fff" stroke="#a82424" stroke-width="1.800" stroke-linejoin="miter"/>
<path d="M123 683.5l3 1" fill="none" stroke="#7a1a1a" stroke-width="1.500"/>
<text x="34" y="703.3" font-size="18" fill="#10108a" stroke="#10108a" stroke-width=".35" font-family="'Liberation Sans',sans-serif" textLength="38" lengthAdjust="spacingAndGlyphs">sber</text>
<path d="M145 683H240L252 693V710H145Z" fill="#fff" stroke="#a82424" stroke-width="1.800" stroke-linejoin="miter"/>
<path d="M239 683.5l3 1" fill="none" stroke="#7a1a1a" stroke-width="1.500"/>
<text x="150" y="703.3" font-size="18" fill="#10108a" stroke="#10108a" stroke-width=".35" font-family="'Liberation Sans',sans-serif" textLength="25" lengthAdjust="spacingAndGlyphs">luk</text>
<path d="M260.5 683H355.5L367.5 693V710H260.5Z" fill="#fff" stroke="#a82424" stroke-width="1.800" stroke-linejoin="miter"/>
<path d="M354.5 683.5l3 1" fill="none" stroke="#7a1a1a" stroke-width="1.500"/>
<text x="265.5" y="703.3" font-size="18" fill="#10108a" stroke="#10108a" stroke-width=".35" font-family="'Liberation Sans',sans-serif" textLength="40.5" lengthAdjust="spacingAndGlyphs">gazp</text></svg>
<div class="a" style="left:379px;top:686.5px;width:28px;height:20px;background:#d4d0c8;border:1px solid;border-color:#f4f3f0 #404040 #404040 #f4f3f0;box-shadow:inset -1px -1px 0 #808080;"></div>
<div class="t" style="left:389px;top:688.0px;line-height:16px;font-size:12px;font-family:'Liberation Sans',sans-serif;color:#000;">+</div>
<div class="t" style="left:23px;top:721.0px;line-height:16px;font-size:12px;font-family:'Liberation Sans',sans-serif;color:#222;transform:scaleX(1.0409);transform-origin:left;">41%</div>
<div class="a" style="left:49.5px;top:723px;width:98px;height:3px;background:#7c7a76;border-bottom:1px solid #fff;"></div>
<svg style="left:59.5px;top:715.5px" width="11" height="22" viewBox="0 0 11 22"><path d="M0.500 0.500h10v15l-5 6.500l-5-6.500z" fill="#d4d0c8" stroke="#fff" stroke-width="1"/><path d="M10.500 0.500v15l-5 6.500" fill="none" stroke="#404040" stroke-width="1.200"/></svg>
<div class="a" style="left:54px;top:737.5px;width:1px;height:4px;background:#222;"></div>
<div class="a" style="left:64px;top:737.5px;width:1px;height:4px;background:#222;"></div>
<div class="a" style="left:74px;top:737.5px;width:1px;height:4px;background:#222;"></div>
<div class="a" style="left:84px;top:737.5px;width:1px;height:4px;background:#222;"></div>
<div class="a" style="left:93px;top:737.5px;width:1px;height:4px;background:#222;"></div>
<div class="a" style="left:103px;top:737.5px;width:1px;height:4px;background:#222;"></div>
<div class="a" style="left:113px;top:737.5px;width:1px;height:4px;background:#222;"></div>
<div class="a" style="left:133px;top:737.5px;width:1px;height:4px;background:#222;"></div>
<div class="a" style="left:143px;top:737.5px;width:1px;height:4px;background:#222;"></div>
<div class="a" style="left:880.5px;top:165px;width:1.5px;height:1.5px;background:#9a9aa8;"></div>
<div class="a" style="left:880.5px;top:168px;width:1.5px;height:1.5px;background:#9a9aa8;"></div>
<div class="a" style="left:880.5px;top:171px;width:1.5px;height:1.5px;background:#9a9aa8;"></div>
<div class="a" style="left:880.5px;top:174px;width:1.5px;height:1.5px;background:#9a9aa8;"></div>
<div class="a" style="left:880.5px;top:177px;width:1.5px;height:1.5px;background:#9a9aa8;"></div>
<div class="a" style="left:880.5px;top:180px;width:1.5px;height:1.5px;background:#9a9aa8;"></div>
<div class="a" style="left:880.5px;top:183px;width:1.5px;height:1.5px;background:#9a9aa8;"></div>
<svg style="left:888px;top:166px" width="18" height="18" viewBox="0 0 18 18"><rect x="0" y="0" width="18" height="18" rx="1" fill="#4a4fc0"/><rect x="0" y="0" width="2" height="18" fill="#6a6fdf"/><rect x="3" y="1" width="12" height="8" fill="#f4f4fb"/><rect x="4" y="11" width="10" height="7" fill="#2a2d7a"/><rect x="9" y="12.5" width="3.5" height="4.5" fill="#e8e8f4"/></svg>
<svg style="left:915.5px;top:166px" width="18" height="18" viewBox="0 0 18 18"><rect x="0" y="0" width="18" height="18" rx="1" fill="#4a4fc0"/><rect x="0" y="0" width="2" height="18" fill="#6a6fdf"/><rect x="3" y="1" width="12" height="8" fill="#f4f4fb"/><rect x="4" y="11" width="10" height="7" fill="#2a2d7a"/><rect x="9" y="12.5" width="3.5" height="4.5" fill="#e8e8f4"/><rect x="3" y="1" width="12" height="8" fill="#fbeaea"/><text x="3.200" y="8.300" font-size="8.500" font-weight="bold" fill="#e02828" font-family="'Liberation Sans',sans-serif" textLength="11.500" lengthAdjust="spacingAndGlyphs">HS</text></svg>
<svg style="left:941.5px;top:165px" width="22" height="20" viewBox="0 0 22 20"><path d="M1 6h7l2 2h7v11H1z" fill="#c8962a"/><path d="M1 19l4-9h16l-4 9z" fill="#f2c04a" stroke="#b8821c" stroke-width=".7"/><path d="M5.500 11h14l-1.300 3h-14z" fill="#fbe08a" opacity=".8"/><path d="M12 5c2-3 6-3 8 0" fill="none" stroke="#5b7fb5" stroke-width="1.6"/><path d="M21 2v5h-5z" fill="#44689f"/></svg>
<div class="a" style="left:968px;top:163px;width:1px;height:24px;background:#9a9aa6;"></div>
<div class="a" style="left:1000px;top:163px;width:1px;height:24px;background:#9a9aa6;"></div>
<div class="a" style="left:1087px;top:163px;width:1px;height:24px;background:#9a9aa6;"></div>
<div class="a" style="left:1119px;top:163px;width:1px;height:24px;background:#9a9aa6;"></div>
<svg style="left:976px;top:166px" width="18" height="18" viewBox="0 0 18 18"><rect x="0.7" y="0.7" width="7" height="7" fill="#a9c0ea" stroke="#232a42" stroke-width="1.400"/><rect x="2.9000000000000004" y="2.9000000000000004" width="2.600" height="2.600" fill="#3a5aa8"/><rect x="0.7" y="10" width="7" height="7" fill="#a9c0ea" stroke="#232a42" stroke-width="1.400"/><rect x="2.9000000000000004" y="12.2" width="2.600" height="2.600" fill="#3a5aa8"/><rect x="10" y="0.7" width="7" height="7" fill="#a9c0ea" stroke="#232a42" stroke-width="1.400"/><rect x="12.2" y="2.9000000000000004" width="2.600" height="2.600" fill="#3a5aa8"/><rect x="10" y="10" width="7" height="7" fill="#a9c0ea" stroke="#232a42" stroke-width="1.400"/><rect x="12.2" y="12.2" width="2.600" height="2.600" fill="#3a5aa8"/></svg>
<svg style="left:1006px;top:166px" width="20" height="19" viewBox="0 0 20 19"><path d="M1 1h7l3 3v9.500H1z" fill="#e6edf6" stroke="#a9b8cc" stroke-width="1"/><path d="M2.500 4.500h5M2.500 6.500h6.500M2.500 8.500h6.500M2.500 10.500h6.500" stroke="#aebdd4" stroke-width=".8"/><path d="M8 5.500h7.500l3.500 3.500v9H8z" fill="#eaf0f8" stroke="#98a8be" stroke-width="1"/><path d="M9.500 9.500h5.500M9.500 11.500h8M9.500 13.500h8M9.500 15.500h8" stroke="#a3b4cd" stroke-width=".8"/></svg>
<svg style="left:1037px;top:165px" width="13" height="19" viewBox="0 0 13 19"><path d="M3.200 0.500L8.300 11.500M9.800 0.500L4.700 11.500" stroke="#aeb6c4" stroke-width="2.200" fill="none" stroke-linecap="round"/><ellipse cx="3.200" cy="14.300" rx="2.300" ry="3.400" transform="rotate(18 3.2 14.3)" fill="#dfe6f6" stroke="#7f97d0" stroke-width="1.700"/><ellipse cx="9.800" cy="14.300" rx="2.300" ry="3.400" transform="rotate(-18 9.8 14.3)" fill="#dfe6f6" stroke="#7f97d0" stroke-width="1.700"/></svg>
<svg style="left:1061px;top:165px" width="22" height="20" viewBox="0 0 22 20"><rect x="1" y="3" width="15" height="15" rx="1" fill="#e3d39a" stroke="#cdbb7c" stroke-width="1"/><rect x="5" y="1" width="7" height="4" fill="#d9d3c0" stroke="#bdb59a" stroke-width=".8"/><path d="M9 9h8l3 3v7H9z" fill="#eef0f4" stroke="#b6bfcc" stroke-width="1"/><path d="M11 13h6M11 15h6M11 17h6" stroke="#c5ccd8" stroke-width="1"/></svg>
<svg style="left:1095px;top:165px" width="17" height="17" viewBox="0 0 17 17"><path d="M1.5 1.5l14 14M15.500 1.500l-14 14" stroke="#858585" stroke-width="2.2" fill="none" stroke-linecap="round"/></svg>
<svg style="left:1126px;top:165px" width="20" height="20" viewBox="0 0 20 20"><path d="M3 16L16 3" stroke="#8c8c8c" stroke-width="1.300"/><rect x="13.500" y="0.500" width="4.800" height="4.800" fill="#8c8c8c"/><rect x="0.500" y="13.500" width="4.800" height="4.800" fill="#8c8c8c"/></svg>
<svg style="left:1153.5px;top:165px" width="20" height="20" viewBox="0 0 20 20"><path d="M3 16L16 3" stroke="#a9b4c6" stroke-width="1.300"/><rect x="13.500" y="0.500" width="4.800" height="4.800" fill="#97a3b8"/><rect x="0.500" y="13.500" width="4.800" height="4.800" fill="#97a3b8"/><path d="M6.500 5.500l7 8M13.500 5.500l-7 8" stroke="#ee8080" stroke-width="1.100"/></svg>
<div class="a" style="left:1178.5px;top:160.5px;width:11px;height:30px;background:linear-gradient(180deg,#e6e4df,#a9a7a1);border-radius:0 0 4px 0;"></div>
<svg style="left:1181px;top:181px" width="8" height="7" viewBox="0 0 8 7"><path d="M0 0.500h6" stroke="#fff" stroke-width="1"/><path d="M1 3h6l-3 3z" fill="#fff"/></svg>
<div class="a" style="left:874.5px;top:192px;width:392px;height:67.5px;background:#fff;"></div>
<div class="a" style="left:877px;top:195px;width:180px;height:19px;background:#d4d0c8;border-right:2px solid #404040;"></div>
<div class="t" style="left:927px;top:198.5px;line-height:14px;font-size:11px;font-family:'DejaVu Sans','Liberation Sans',sans-serif;color:#111;transform:scaleX(1.0028);transform-origin:left;">FiboDayLevels</div>
<div class="a" style="left:1058.5px;top:195px;width:205.5px;height:19px;background:#d4d0c8;border-right:2px solid #404040;"></div>
<div class="t" style="left:1108.5px;top:198.5px;line-height:14px;font-size:11px;font-family:'DejaVu Sans','Liberation Sans',sans-serif;color:#111;transform:scaleX(0.9664);transform-origin:left;">Пользовательские</div>
<div class="a" style="left:877px;top:216px;width:155px;height:19px;background:#d4d0c8;border-right:2px solid #404040;"></div>
<div class="t" style="left:891px;top:219.5px;line-height:14px;font-size:11px;font-family:'DejaVu Sans','Liberation Sans',sans-serif;color:#111;transform:scaleX(0.9641);transform-origin:left;">Служебные Элементы</div>
<div class="a" style="left:1033.5px;top:216px;width:76.0px;height:19px;background:#d4d0c8;border-right:2px solid #404040;"></div>
<div class="t" style="left:1047px;top:219.5px;line-height:14px;font-size:11px;font-family:'DejaVu Sans','Liberation Sans',sans-serif;color:#111;transform:scaleX(0.9746);transform-origin:left;">Позиция</div>
<div class="a" style="left:1111px;top:216px;width:153px;height:19px;background:#d4d0c8;border-right:2px solid #404040;"></div>
<div class="t" style="left:1125.5px;top:219.5px;line-height:14px;font-size:11px;font-family:'DejaVu Sans','Liberation Sans',sans-serif;color:#111;transform:scaleX(0.9635);transform-origin:left;">Торговая Математика</div>
<div class="a" style="left:874.5px;top:235.5px;width:139.5px;height:24.0px;background:#d4d0c8;border-right:2px solid #404040;"></div>
<div class="t" style="left:909.5px;top:241.5px;line-height:14px;font-size:11px;font-family:'DejaVu Sans','Liberation Sans',sans-serif;color:#111;transform:scaleX(0.9535);transform-origin:left;">Индикаторы</div>
<div class="a" style="left:1015.5px;top:237px;width:148.5px;height:20.5px;background:#d4d0c8;border-right:2px solid #404040;"></div>
<div class="t" style="left:1046px;top:241.2px;line-height:14px;font-size:11px;font-family:'DejaVu Sans','Liberation Sans',sans-serif;color:#111;transform:scaleX(1.0043);transform-origin:left;">Market Position</div>
<div class="a" style="left:1165.5px;top:237px;width:98.5px;height:20.5px;background:#d4d0c8;border-right:2px solid #404040;"></div>
<div class="t" style="left:1197.5px;top:241.2px;line-height:14px;font-size:11px;font-family:'DejaVu Sans','Liberation Sans',sans-serif;color:#111;transform:scaleX(1.0054);transform-origin:left;">Nikolz</div>
<div class="a" style="left:874.5px;top:259.5px;width:392px;height:206px;background:#d4d0c8;"></div>
<div class="a" style="left:874.5px;top:462.5px;width:392px;height:2px;background:#5e5c56;"></div>
<div class="a" style="left:1264.5px;top:259.5px;width:2px;height:205px;background:#5e5c56;"></div>
<div class="a" style="left:878.5px;top:262.5px;width:383px;height:197px;background:#fff;border:2px solid;border-color:#5a5852 #f4f3f0 #f4f3f0 #5a5852;"></div>
<div class="a" style="left:881px;top:292.5px;width:362px;height:12.5px;background:#d4d0c8;"></div>
<div class="a" style="left:881px;top:264.5px;width:362px;height:194px;overflow:hidden">
<div class="t" style="left:2px;top:1.5px;line-height:14px;font-size:11px;font-family:'DejaVu Sans','Liberation Sans',sans-serif;color:#111;transform:scaleX(0.9750);transform-origin:left;">Cuttler&#x27;s RSI</div>
<div class="t" style="left:2px;top:14.9px;line-height:14px;font-size:11px;font-family:'DejaVu Sans','Liberation Sans',sans-serif;color:#111;transform:scaleX(0.9750);transform-origin:left;">Сумма за</div>
<div class="t" style="left:2px;top:28.2px;line-height:14px;font-size:11px;font-family:'DejaVu Sans','Liberation Sans',sans-serif;color:#111;transform:scaleX(0.9750);transform-origin:left;">SMA</div>
<div class="t" style="left:2px;top:41.6px;line-height:14px;font-size:11px;font-family:'DejaVu Sans','Liberation Sans',sans-serif;color:#111;transform:scaleX(0.9750);transform-origin:left;">StDev</div>
<div class="t" style="left:2px;top:55.0px;line-height:14px;font-size:11px;font-family:'DejaVu Sans','Liberation Sans',sans-serif;color:#111;transform:scaleX(0.9750);transform-origin:left;">EMA</div>
<div class="t" style="left:2px;top:68.4px;line-height:14px;font-size:11px;font-family:'DejaVu Sans','Liberation Sans',sans-serif;color:#111;transform:scaleX(0.9750);transform-origin:left;">TR</div>
<div class="t" style="left:2px;top:81.7px;line-height:14px;font-size:11px;font-family:'DejaVu Sans','Liberation Sans',sans-serif;color:#111;transform:scaleX(0.9750);transform-origin:left;">ATR</div>
<div class="t" style="left:2px;top:95.1px;line-height:14px;font-size:11px;font-family:'DejaVu Sans','Liberation Sans',sans-serif;color:#111;transform:scaleX(0.9750);transform-origin:left;">CCI</div>
<div class="t" style="left:2px;top:108.5px;line-height:14px;font-size:11px;font-family:'DejaVu Sans','Liberation Sans',sans-serif;color:#111;transform:scaleX(0.9750);transform-origin:left;">Typical Price</div>
<div class="t" style="left:2px;top:121.8px;line-height:14px;font-size:11px;font-family:'DejaVu Sans','Liberation Sans',sans-serif;color:#111;transform:scaleX(0.9750);transform-origin:left;">Bollinger Bands (+)</div>
<div class="t" style="left:2px;top:135.2px;line-height:14px;font-size:11px;font-family:'DejaVu Sans','Liberation Sans',sans-serif;color:#111;transform:scaleX(0.9750);transform-origin:left;">Bollinger Bands (-)</div>
<div class="t" style="left:2px;top:148.6px;line-height:14px;font-size:11px;font-family:'DejaVu Sans','Liberation Sans',sans-serif;color:#111;transform:scaleX(0.9750);transform-origin:left;">Относительный</div>
<div class="t" style="left:2px;top:161.9px;line-height:14px;font-size:11px;font-family:'DejaVu Sans','Liberation Sans',sans-serif;color:#111;transform:scaleX(0.9750);transform-origin:left;">Максимум за</div>
<div class="t" style="left:2px;top:175.3px;line-height:14px;font-size:11px;font-family:'DejaVu Sans','Liberation Sans',sans-serif;color:#111;transform:scaleX(0.9750);transform-origin:left;">Минимум за</div>
<div class="t" style="left:2px;top:188.7px;line-height:14px;font-size:11px;font-family:'DejaVu Sans','Liberation Sans',sans-serif;color:#111;transform:scaleX(0.9750);transform-origin:left;">MACD</div>
</div>
<div class="a" style="left:1243px;top:264.5px;width:16px;height:194px;background:#ecebe7;"></div>
<div class="a" style="left:1243.5px;top:264.5px;width:15.5px;height:15.5px;background:#d4d0c8;border:1px solid;border-color:#fff #404040 #404040 #fff;box-shadow:inset -1px -1px 0 #808080;"></div>
<svg style="left:1247px;top:270.0px" width="8" height="4" viewBox="0 0 8 4"><path d="M0 4l4-4 4 4z" fill="#000"/></svg>
<div class="a" style="left:1243.5px;top:442px;width:15.5px;height:15.5px;background:#d4d0c8;border:1px solid;border-color:#fff #404040 #404040 #fff;box-shadow:inset -1px -1px 0 #808080;"></div>
<svg style="left:1247px;top:447.5px" width="8" height="4" viewBox="0 0 8 4"><path d="M0 0h8l-4 4z" fill="#000"/></svg>
<div class="a" style="left:1243.5px;top:318px;width:15.5px;height:75.5px;background:#d4d0c8;border:1px solid;border-color:#fff #404040 #404040 #fff;box-shadow:inset -1px -1px 0 #808080;"></div>
<div class="a" style="left:874.5px;top:465.5px;width:392px;height:278px;background:#fff;"></div>
<div class="a" style="left:876.5px;top:469.5px;width:388px;height:273px;background:#f5f5f5;border:1px solid #d0d0d0;border-radius:5px 5px 0 0;border-bottom:none;"></div>
<div class="a" style="left:877.5px;top:470.5px;width:107.5px;height:26px;background:#f5f5f5;border-right:1px solid #9a9a9a;"></div>
<div class="a" style="left:985px;top:470.5px;width:279px;height:26px;background:#fff;border-radius:0 5px 0 0;"></div>
<div class="t" style="left:888.5px;top:476.2px;line-height:14px;font-size:11px;font-family:'DejaVu Sans','Liberation Sans',sans-serif;color:#111;transform:scaleX(0.9583);transform-origin:left;">По категориям</div>
<div class="a" style="left:878.5px;top:497px;width:386px;height:246px;background:#fff;border:1px solid #a8a8a8;border-radius:4px 4px 0 0;border-bottom:none;"></div>
<div class="t" style="left:4px;top:761.0px;line-height:16px;font-size:12px;font-family:'Liberation Sans',sans-serif;color:#111;transform:scaleX(0.9999);transform-origin:left;">Отключен</div>
<div class="a" style="left:102px;top:759px;width:1px;height:21px;background:#8c8a84;"></div>
<div class="a" style="left:103px;top:759px;width:1px;height:21px;background:#f2f1ee;"></div>
<div class="a" style="left:177px;top:759px;width:1px;height:21px;background:#8c8a84;"></div>
<div class="a" style="left:178px;top:759px;width:1px;height:21px;background:#f2f1ee;"></div>
<div class="a" style="left:382px;top:759px;width:1px;height:21px;background:#8c8a84;"></div>
<div class="a" style="left:383px;top:759px;width:1px;height:21px;background:#f2f1ee;"></div>
<div class="a" style="left:411px;top:759px;width:1px;height:21px;background:#8c8a84;"></div>
<div class="a" style="left:412px;top:759px;width:1px;height:21px;background:#f2f1ee;"></div>
<div class="t" style="left:183px;top:761.0px;line-height:16px;font-size:12px;font-family:'Liberation Sans',sans-serif;color:#111;transform:scaleX(1.0748);transform-origin:left;">05.01.2011 15:50:35 (Локальное)</div>
<svg style="left:390px;top:761px" width="14" height="17" viewBox="0 0 14 17"><rect x="0.500" y="0.500" width="12.500" height="15.500" rx="1.500" fill="#f6f8fb" stroke="#8a97ac" stroke-width="1"/><rect x="0.500" y="0.500" width="2.500" height="15.500" fill="#c5d3e6"/><path d="M4 4h8M4 6.500h8M4 9h8M4 11.500h8" stroke="#dfe5ee" stroke-width="1"/></svg>
<svg style="left:441px;top:757px" width="104" height="24" viewBox="0 0 104 24"><path d="M52 22.500V6Q52 2.500 56 2.500H90Q96 2.500 97.500 8L100 22.500" fill="#ebe9e4" stroke="#b5b3ad" stroke-width="1"/><path d="M1.500 22.500V6Q1.500 1.500 6 1.500H42Q50 1.500 51.500 9L53.500 22.500Z" fill="#fcfcfb" stroke="#a8a6a0" stroke-width="1"/></svg>
<div class="t" style="left:456px;top:761.5px;line-height:16px;font-size:12px;font-family:'Liberation Sans',sans-serif;color:#111;transform:scaleX(0.9800);transform-origin:left;">Tab1</div>
<div class="t" style="left:503px;top:761.0px;line-height:16px;font-size:12px;font-family:'Liberation Sans',sans-serif;color:#111;transform:scaleX(0.9800);transform-origin:left;">Tab2</div>
<div class="a" style="left:567px;top:759px;width:25px;height:21px;background:#d4d0c8;border:1px solid;border-color:#f8f8f6 #404040 #404040 #f8f8f6;box-shadow:inset -1px -1px 0 #808080;"></div>
<div class="t" style="left:575.5px;top:761.0px;line-height:16px;font-size:12px;font-family:'Liberation Sans',sans-serif;color:#000;">+</div>
<div class="a" style="left:0px;top:783.5px;width:1280px;height:1px;background:#fff;"></div>
<div class="a" style="left:2px;top:786px;width:50px;height:16px;background:#d4d0c8;border:1px solid;border-color:#fff #404040 #404040 #fff;box-shadow:inset -1px -1px 0 #808080;"></div>
<svg style="left:6px;top:789px" width="15" height="12" viewBox="0 0 15 12"><path d="M1 2q3-2 6 0v5q-3-2-6 0z" fill="#e8502a"/><path d="M8 2q3 2 6 0v5q-3 2-6 0z" fill="#5ab532"/><path d="M1 8q3-2 6 0v5q-3-2-6 0z" fill="#3a78d8"/><path d="M8 8q3 2 6 0v5q-3 2-6 0z" fill="#f2c12c"/></svg>
<div class="t" style="left:22px;top:789.0px;line-height:16px;font-size:12px;font-family:'Liberation Sans',sans-serif;color:#000;font-weight:bold;transform:scaleX(0.9574);transform-origin:left;">Пуск</div>
<div class="a" style="left:58px;top:786px;width:104px;height:16px;background:#d4d0c8;border:1px solid;border-color:#fff #404040 #404040 #fff;box-shadow:inset -1px -1px 0 #808080;"></div>
<svg style="left:62px;top:788px" width="16" height="14" viewBox="0 0 16 14"><g fill="#5cb82c" stroke="#2d7a12" stroke-width=".800"><circle cx="8" cy="3.500" r="3"/><circle cx="3.500" cy="7" r="3"/><circle cx="12.500" cy="7" r="3"/><circle cx="5" cy="12" r="3"/><circle cx="11" cy="12" r="3"/></g><circle cx="8" cy="8" r="2.200" fill="#f4d21c"/><circle cx="11" cy="12" r="2" fill="#e03a2a"/></svg>
<div class="t" style="left:82px;top:789.0px;line-height:16px;font-size:12px;font-family:'Liberation Sans',sans-serif;color:#000;transform:scaleX(0.8672);transform-origin:left;">ICQ</div>
<div class="a" style="left:166px;top:786px;width:102px;height:16px;background:#d4d0c8;border:1px solid;border-color:#fff #404040 #404040 #fff;box-shadow:inset -1px -1px 0 #808080;"></div>
<svg style="left:172px;top:788px" width="12" height="14" viewBox="0 0 12 14"><rect x="0.500" y="0.500" width="11" height="14" rx="1" fill="#c9d7ee" stroke="#6f88b8" stroke-width="1"/><rect x="2.500" y="2.500" width="7" height="3.500" fill="#f5f8fd" stroke="#8ea2c8" stroke-width=".600"/><path d="M3 8.500h6M3 11h6" stroke="#6f88b8" stroke-width="1.200" stroke-dasharray="1.500 .800"/></svg>
<div class="t" style="left:188px;top:789.0px;line-height:16px;font-size:12px;font-family:'Liberation Sans',sans-serif;color:#000;transform:scaleX(0.9609);transform-origin:left;">Калькулятор</div>
<div class="a" style="left:272px;top:786px;width:104px;height:16px;background:#eceae6;border:1px solid;border-color:#404040 #fff #fff #404040;box-shadow:inset 1px 1px 0 #808080;"></div>
<svg style="left:277px;top:788px" width="15" height="14" viewBox="0 0 15 14"><rect width="15" height="14" fill="#2d5f8e"/><rect x="2" y="9" width="2" height="5" fill="#fff"/><rect x="5" y="7" width="2" height="7" fill="#fff"/><rect x="8" y="5" width="2" height="9" fill="#f5b942"/><rect x="11" y="8" width="2" height="6" fill="#fff"/></svg>
<div class="t" style="left:296px;top:789.0px;line-height:16px;font-size:12px;font-family:'Liberation Sans',sans-serif;color:#000;font-weight:bold;transform:scaleX(0.9813);transform-origin:left;">TSLab (вер</div>
<div class="a" style="left:380px;top:786px;width:102px;height:16px;background:#d4d0c8;border:1px solid;border-color:#fff #404040 #404040 #fff;box-shadow:inset -1px -1px 0 #808080;"></div>
<svg style="left:383px;top:787px" width="16" height="16" viewBox="0 0 16 16"><circle cx="8" cy="8" r="7.500" fill="#e8c22c"/><path d="M8 8L1.500 4.200A7.500 7.500 0 0 1 14.500 4.200Z" fill="#dd4b39"/><path d="M8 8L1.500 4.200A7.500 7.500 0 0 0 8 15.500Z" fill="#4caf50"/><circle cx="8" cy="8" r="3.300" fill="#fff"/><circle cx="8" cy="8" r="2.500" fill="#4a8af4"/></svg>
<div class="t" style="left:403px;top:789.0px;line-height:16px;font-size:12px;font-family:'Liberation Sans',sans-serif;color:#000;transform:scaleX(0.9191);transform-origin:left;">Слои для ви...</div>
<div class="a" style="left:485px;top:786px;width:103px;height:16px;background:#d4d0c8;border:1px solid;border-color:#fff #404040 #404040 #fff;box-shadow:inset -1px -1px 0 #808080;"></div>
<svg style="left:490px;top:787px" width="17" height="15" viewBox="0 0 17 15"><rect width="17" height="15" fill="#f7e018"/><text x="1.500" y="9" font-size="9" font-weight="bold" fill="#d8201c" font-family="'Liberation Sans',sans-serif">1С</text><path d="M2 11.500h13" stroke="#d8201c" stroke-width="1.500"/></svg>
<div class="t" style="left:509px;top:789.0px;line-height:16px;font-size:12px;font-family:'Liberation Sans',sans-serif;color:#000;transform:scaleX(0.9448);transform-origin:left;">1С:Предпри...</div>
<div class="a" style="left:592px;top:786px;width:103px;height:16px;background:#d4d0c8;border:1px solid;border-color:#fff #404040 #404040 #fff;box-shadow:inset -1px -1px 0 #808080;"></div>
<svg style="left:597px;top:788px" width="17" height="14" viewBox="0 0 17 14"><path d="M0.500 3.500q0-2 2-2h3.500l2 2h7q1.500 0 1.500 1.500v9h-16z" fill="#f4dc8a" stroke="#b99a3c" stroke-width=".900"/><circle cx="8" cy="9" r="3.800" fill="#f5f7fb" stroke="#8e9bb0" stroke-width=".800"/><circle cx="8" cy="9" r="1.600" fill="#9ab4dc"/></svg>
<div class="t" style="left:617px;top:789.0px;line-height:16px;font-size:12px;font-family:'Liberation Sans',sans-serif;color:#000;transform:scaleX(0.9115);transform-origin:left;">Съемный ди...</div>
<div class="a" style="left:700px;top:786px;width:102px;height:16px;background:#d4d0c8;border:1px solid;border-color:#fff #404040 #404040 #fff;box-shadow:inset -1px -1px 0 #808080;"></div>
<svg style="left:704px;top:788px" width="17" height="14" viewBox="0 0 17 14"><path d="M0.500 3.500q0-2 2-2h3.500l2 2h7q1.500 0 1.500 1.500v9h-16z" fill="#f4dc8a" stroke="#b99a3c" stroke-width=".900"/><circle cx="8" cy="9" r="3.800" fill="#f5f7fb" stroke="#8e9bb0" stroke-width=".800"/><circle cx="8" cy="9" r="1.600" fill="#9ab4dc"/></svg>
<div class="t" style="left:723px;top:789.0px;line-height:16px;font-size:12px;font-family:'Liberation Sans',sans-serif;color:#000;transform:scaleX(0.6743);transform-origin:left;">1</div>
<div class="a" style="left:806px;top:786px;width:103px;height:16px;background:#d4d0c8;border:1px solid;border-color:#fff #404040 #404040 #fff;box-shadow:inset -1px -1px 0 #808080;"></div>
<svg style="left:811px;top:788px" width="17" height="14" viewBox="0 0 17 14"><path d="M0.500 3.500q0-2 2-2h3.500l2 2h7q1.500 0 1.500 1.500v9h-16z" fill="#f4dc8a" stroke="#b99a3c" stroke-width=".900"/><circle cx="8" cy="9" r="3.800" fill="#f5f7fb" stroke="#8e9bb0" stroke-width=".800"/><circle cx="8" cy="9" r="1.600" fill="#9ab4dc"/></svg>
<div class="t" style="left:830px;top:789.0px;line-height:16px;font-size:12px;font-family:'Liberation Sans',sans-serif;color:#000;transform:scaleX(0.9094);transform-origin:left;">PIX_INDIA_0...</div>
<div class="a" style="left:913px;top:786px;width:104px;height:16px;background:#d4d0c8;border:1px solid;border-color:#fff #404040 #404040 #fff;box-shadow:inset -1px -1px 0 #808080;"></div>
<svg style="left:919px;top:787px" width="14" height="15" viewBox="0 0 14 15"><rect x="0.500" y="0.500" width="12" height="14.500" fill="#f3f6fb" stroke="#6f88b8" stroke-width="1"/><circle cx="6.500" cy="6.500" r="3.200" fill="#cfe0f6" stroke="#4a6aa8" stroke-width="1.200"/><path d="M9 9l3 3.500" stroke="#4a6aa8" stroke-width="1.600"/></svg>
<div class="t" style="left:936px;top:789.0px;line-height:16px;font-size:12px;font-family:'Liberation Sans',sans-serif;color:#000;transform:scaleX(0.9930);transform-origin:left;">Результаты ...</div>
<div class="a" style="left:1033px;top:786px;width:247px;height:16px;background:#d4d0c8;border:1px solid;border-color:#808080 #fff #fff #808080;"></div>
<svg style="left:1037px;top:791.5px" width="15" height="13" viewBox="0 0 15 13"><path d="M1 1l6 1 4 5-5 3z" fill="#3fa23a" stroke="#2a7a28" stroke-width=".600"/><path d="M7 7l5 3v3h-5z" fill="#8a6ab8"/></svg>
<svg style="left:1054px;top:791.5px" width="15" height="13" viewBox="0 0 15 13"><rect x="0.500" y="0.500" width="14" height="12" fill="#f6f8fc" stroke="#8fb0e0" stroke-width="1"/><path d="M6 10q1-5 4-7q0 4-4 7z" fill="#f08a3a"/></svg>
<svg style="left:1072px;top:791.5px" width="15" height="13" viewBox="0 0 15 13"><rect x="0" y="2" width="8" height="8" fill="#2b3f7a"/><path d="M10 3q2 3 0 7M12.500 1.500q3 5 0 10" stroke="#3aa83a" stroke-width="1.300" fill="none"/></svg>
<svg style="left:1090px;top:791.5px" width="15" height="13" viewBox="0 0 15 13"><ellipse cx="7" cy="6" rx="7" ry="5.500" fill="#8ed048" stroke="#5aa82a" stroke-width=".800"/><path d="M3 8l3-4 2 3 3-3" stroke="#eaf8d8" stroke-width="1.200" fill="none"/></svg>
<svg style="left:1108px;top:791.5px" width="15" height="13" viewBox="0 0 15 13"><path d="M2 3q2-4 5 0q3-4 5 0" fill="#58b838" stroke="#3a8a22" stroke-width=".600"/><rect x="0.500" y="3.500" width="13" height="9" fill="#f6f0c0" stroke="#8a7a2a" stroke-width=".800"/><path d="M1 4l6 5 6-5" stroke="#3a8a22" stroke-width="1" fill="none"/></svg>
<svg style="left:1126px;top:791.5px" width="15" height="13" viewBox="0 0 15 13"><path d="M7 0.500l6 2.500v9h-12v-9z" fill="#f2d21c" stroke="#8a6ab0" stroke-width=".900"/><rect x="6" y="5" width="2" height="6" fill="#3a2a1a"/></svg>
<svg style="left:1145px;top:791.5px" width="15" height="13" viewBox="0 0 15 13"><rect x="5" y="0.500" width="8" height="7" fill="#5a5ab0"/><rect x="0.500" y="4" width="8" height="7" fill="#2b3f8a"/><path d="M9 9l4 3" stroke="#e88aa0" stroke-width="1.200"/></svg>
<svg style="left:1162px;top:791.5px" width="15" height="13" viewBox="0 0 15 13"><circle cx="7" cy="6" r="5.500" fill="#9a9a9a" stroke="#555" stroke-width="1"/><circle cx="8" cy="5" r="2.500" fill="#d8d8d8"/></svg>
<svg style="left:1180px;top:791.5px" width="15" height="13" viewBox="0 0 15 13"><rect x="0.500" y="0.500" width="9" height="4" fill="#f2f2f2" stroke="#666" stroke-width=".800"/><rect x="0.500" y="5.500" width="9" height="4" fill="#f2f2f2" stroke="#666" stroke-width=".800"/><circle cx="11" cy="9" r="3.500" fill="#fff" stroke="#444" stroke-width=".800"/></svg>
<div class="t" style="left:1222px;top:792.5px;line-height:16px;font-size:12px;font-family:'Liberation Sans',sans-serif;color:#000;transform:scaleX(0.9324);transform-origin:left;">15:50</div>
<div class="a" style="left:845px;top:770px;width:92.5px;height:16px;background:#ffffe1;border:1px solid #000;"></div>
<div class="t" style="left:849px;top:771.0px;line-height:14px;font-size:11px;font-family:'Liberation Sans',sans-serif;color:#000;transform:scaleX(0.9607);transform-origin:left;">PIX_INDIA_08-09</div>
</body></html>
